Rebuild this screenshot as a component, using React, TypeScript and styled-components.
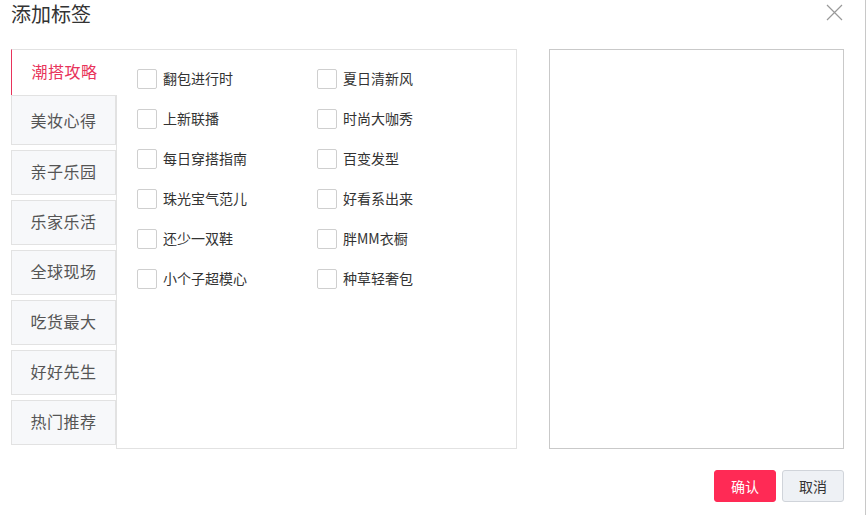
import * as React from 'react';
import styled, { createGlobalStyle } from 'styled-components';

const GlobalStyle = createGlobalStyle`
    html, body {
        margin: 0;
        padding: 0;
        background: #fff;
    }
    body {
        font-family: "Microsoft YaHei", "Noto Sans CJK SC", "Noto Sans", sans-serif;
        color: #333;
    }
`;

const Dialog = styled.div`
    position: relative;
    width: 866px;
    height: 515px;
    box-sizing: border-box;
    border-right: 1px solid #c8c8c8;
    padding: 0 21px 0 11px;
    display: flex;
    flex-direction: column;
`;

const Header = styled.div`
    height: 49px;
    display: flex;
    align-items: flex-start;
    justify-content: space-between;
`;

const Title = styled.h2`
    margin: 0;
    padding-top: 0;
    font-size: 20px;
    font-weight: normal;
    line-height: 28px;
    color: #333;
`;

const CloseButton = styled.button`
    width: 17px;
    height: 17px;
    margin: 4px 1px 0 0;
    padding: 0;
    border: none;
    background: none;
    cursor: pointer;
`;

const Body = styled.div`
    display: flex;
    gap: 32px;
    height: 400px;
`;

const TabPanel = styled.div`
    display: flex;
    width: 506px;
    height: 400px;
    flex-shrink: 0;
`;

const TabList = styled.div`
    width: 106px;
    display: flex;
    flex-direction: column;
    flex-shrink: 0;
    position: relative;
    z-index: 1;
`;

interface TabProps {
    $active?: boolean;
    $joined?: boolean;
}

const Tab = styled.div<TabProps>`
    box-sizing: border-box;
    height: ${p => (p.$active ? '46px' : p.$joined ? '50px' : '45px')};
    margin-top: ${p => (p.$active || p.$joined ? '0' : '5px')};
    padding-top: ${p => (p.$joined ? '3px' : '0')};
    padding-bottom: 3px;
    width: ${p => (p.$active ? '106px' : '105px')};
    display: flex;
    align-items: center;
    justify-content: center;
    font-size: 16px;
    letter-spacing: 0.5px;
    cursor: pointer;
    color: ${p => (p.$active ? '#e8335b' : '#555')};
    background: ${p => (p.$active ? '#fff' : '#f7f8fa')};
    border: 1px solid #e2e2e2;
    border-left: ${p => (p.$active ? '1px solid #e8335b' : '1px solid #e2e2e2')};
    border-bottom: ${p => (p.$active ? 'none' : '1px solid #e2e2e2')};
    border-right: ${p => (p.$active ? 'none' : '1px solid #e2e2e2')};
`;

const Content = styled.div`
    flex: 1;
    margin-left: -1px;
    border: 1px solid #e2e2e2;
    padding: 19px 0 0 20px;
    display: grid;
    grid-template-columns: 180px 180px;
    grid-auto-rows: 40px;
    align-content: start;
`;

const CheckRow = styled.label`
    display: flex;
    align-items: center;
    gap: 6px;
    height: 20px;
    font-size: 14px;
    color: #333;
    cursor: pointer;
`;

const Label = styled.span`
    position: relative;
    top: -1px;
`;

const Box = styled.span`
    width: 20px;
    height: 20px;
    box-sizing: border-box;
    border: 1px solid #cfcfcf;
    border-radius: 2px;
    background: #fff;
    flex-shrink: 0;
`;

const Selected = styled.div`
    width: 295px;
    height: 400px;
    flex-shrink: 0;
    box-sizing: border-box;
    border: 1px solid #c9c9c9;
`;

const Footer = styled.div`
    display: flex;
    justify-content: flex-end;
    gap: 6px;
    margin-top: 21px;
`;

const Button = styled.button<{ $primary?: boolean }>`
    width: 62px;
    height: 32px;
    box-sizing: border-box;
    border-radius: 3px;
    font-family: inherit;
    font-size: 14px;
    cursor: pointer;
    color: ${p => (p.$primary ? '#fff' : '#333')};
    background: ${p => (p.$primary ? '#ff2a55' : '#eef1f5')};
    border: 1px solid ${p => (p.$primary ? '#ff2a55' : '#d0d4da')};
`;

const tabs = ['潮搭攻略', '美妆心得', '亲子乐园', '乐家乐活', '全球现场', '吃货最大', '好好先生', '热门推荐'];

const tags = [
    '翻包进行时', '夏日清新风',
    '上新联播', '时尚大咖秀',
    '每日穿搭指南', '百变发型',
    '珠光宝气范儿', '好看系出来',
    '还少一双鞋', '胖MM衣橱',
    '小个子超模心', '种草轻奢包',
];

export default function App() {
    const [active, setActive] = React.useState(0);
    return (
        <>
            <GlobalStyle />
            <Dialog>
                <Header>
                    <Title>添加标签</Title>
                    <CloseButton aria-label="关闭">
                        <svg width="17" height="17" viewBox="0 0 17 17">
                            <path d="M1 1 L16 16 M16 1 L1 16" stroke="#999" strokeWidth="1.2" fill="none" />
                        </svg>
                    </CloseButton>
                </Header>
                <Body>
                    <TabPanel>
                        <TabList>
                            {tabs.map((t, i) => (
                                <Tab
                                    key={t}
                                    $active={i === active}
                                    $joined={i === active + 1}
                                    onClick={() => setActive(i)}
                                >
                                    {t}
                                </Tab>
                            ))}
                        </TabList>
                        <Content>
                            {tags.map(t => (
                                <CheckRow key={t}>
                                    <Box />
                                    <Label>{t}</Label>
                                </CheckRow>
                            ))}
                        </Content>
                    </TabPanel>
                    <Selected />
                </Body>
                <Footer>
                    <Button $primary>确认</Button>
                    <Button>取消</Button>
                </Footer>
            </Dialog>
        </>
    );
}
